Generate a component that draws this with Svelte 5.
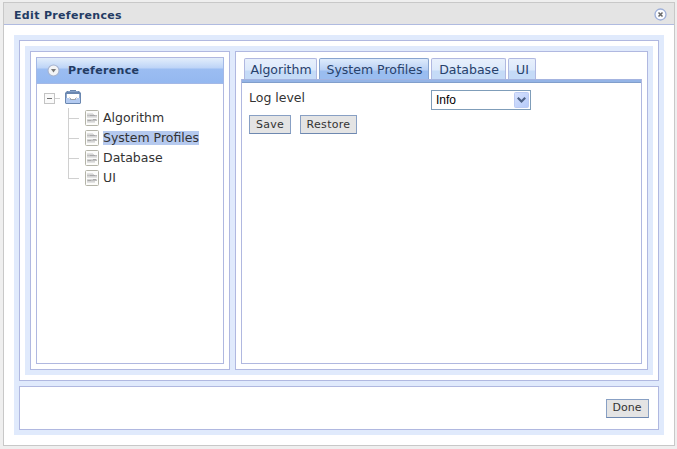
<script>
  const items = ['Algorithm', 'System Profiles', 'Database', 'UI'];
  const widths = [73, 110, 75, 28];
  let selected = $state('System Profiles');
</script>

<div class="window">
  <header class="titlebar">
    <span class="title">Edit Preferences</span>
    <svg class="close" width="13" height="13" viewBox="0 0 13 13">
      <circle cx="6.5" cy="6.5" r="5.5" fill="#fbfcff" stroke="#9dafd9" stroke-width="1.3" />
      <path d="M4.5 4.5l4 4M8.5 4.5l-4 4" stroke="#666" stroke-width="1.5" />
    </svg>
  </header>
  <div class="frame">
    <div class="box main">
      <div class="columns">
        <div class="box left">
          <div class="tree-panel">
            <div class="panel-head">
              <svg width="13" height="13" viewBox="0 0 13 13">
                <circle cx="6.5" cy="6.5" r="5.5" fill="#f3f4f6" stroke="#a4b2cf" stroke-width="1.1" />
                <path d="M4 5h5L6.5 8.5z" fill="#777" />
              </svg>
              <span class="pref">Preference</span>
            </div>
            <div class="tree">
              <div class="root">
                <svg width="16" height="11" viewBox="0 0 16 11" shape-rendering="crispEdges">
                  <rect x=".5" y=".5" width="10" height="10" fill="#fafafa" stroke="#c4c4c4" />
                  <path d="M3 5.5h5" stroke="#707070" />
                  <path d="M11 5.5h5" stroke="#d0d0d0" />
                </svg>
                <svg class="tray" width="16" height="14" viewBox="0 0 16 14">
                  <path d="M2 1h3V0h6v1h3l2 2v10l-1 1H1l-1-1V3z" fill="#6a87b0" />
                  <path d="M3 1.500h10" stroke="#86a2c8" />
                  <path d="M1 4h14v5H1z" fill="#8fa9cc" />
                  <path d="M2 4h12v5H2z" fill="#fff" />
                  <path d="M1 8h3l2 2h4l2-2h3v5H1z" fill="#b3caf0" />
                  <path d="M4.500 7.500l2 2h3l2-2" fill="#fff" stroke="#9a9a94" stroke-width=".8" />
                </svg>
              </div>
              {#each items as item, i}
                <div class="node" class:last={i === items.length - 1}>
                  <span class="branch"></span>
                  <svg width="14" height="16" viewBox="0 0 14 16">
                    <rect x=".5" y=".5" width="13" height="15" rx="1" fill="#fcfcfa" stroke="#b4b4a8" />
                    <path d="M2 3.500h6M2 7.500h10M2 12.500h8" stroke="#e2e2e2" />
                    <path d="M2 4.500h7M2 6.500h10M2 9.500h10M2 11.500h8" stroke="#d6d6d6" />
                    <path d="M2 5.500h10M2 10.500h10" stroke="#bebebe" />
                    <path d="M5 5.500h5M3 10.500h3M8 9.500h3" stroke="#a8a8a8" />
                  </svg>
                  <span class="label" class:selected={item === selected}>{item}</span>
                </div>
              {/each}
            </div>
          </div>
        </div>
        <div class="box right">
          <div class="tabs">
            {#each items as item, i}
              <button class="tab" class:active={item === selected} style="width:{widths[i]}px" onclick={() => (selected = item)}>{item}</button>
            {/each}
          </div>
          <div class="tab-body">
            <div class="field">
              <span class="field-label">Log level</span>
              <div class="select">
                <span>Info</span>
                <svg width="15" height="16" viewBox="0 0 15 16">
                  <defs>
                    <linearGradient id="arrow" x1="0" y1="0" x2="1" y2="1">
                      <stop offset="0" stop-color="#d7e2fe" />
                      <stop offset="1" stop-color="#b4c9f8" />
                    </linearGradient>
                  </defs>
                  <rect x=".5" y=".5" width="14" height="15" rx="1" fill="url(#arrow)" stroke="#bccbf3" />
                  <path d="M3.800 5.800l3.700 3.700 3.700-3.700" fill="none" stroke="#4d6185" stroke-width="2.200" />
                </svg>
              </div>
            </div>
            <div class="actions">
              <button class="btn save">Save</button>
              <button class="btn restore">Restore</button>
            </div>
          </div>
        </div>
      </div>
    </div>
    <div class="box footer">
      <button class="btn done">Done</button>
    </div>
  </div>
</div>

<style>
  :global(body) {
    background: #efefef;
    overflow: hidden;
  }
  div, header, button {
    box-sizing: border-box;
  }
  svg {
    display: block;
    flex: none;
  }
  .window {
    width: 672px;
    height: 444px;
    margin: 2px 0 0 3px;
    border: 1px solid #c8c8c8;
    background: #fff;
    font: 12.5px 'DejaVu Sans', Verdana, sans-serif;
    color: #333;
    display: flex;
    flex-direction: column;
  }
  :global(#app) {
    display: flow-root;
  }
  .titlebar {
    height: 22px;
    flex: none;
    background: #e4e4e4;
    border-bottom: 1px solid #b0bbe0;
    display: flex;
    justify-content: space-between;
    align-items: center;
    padding: 1px 7px 0 10px;
    font-weight: bold;
    font-size: 11px;
    letter-spacing: 0.33px;
    color: #233b63;
  }
  .title {
    white-space: nowrap;
    padding-top: 2px;
  }
  .frame {
    margin: 10px;
    height: 400px;
    flex: none;
    background: #e0eafc;
    padding: 5px;
    display: flex;
    flex-direction: column;
    gap: 5px;
  }
  .box {
    background: #fff;
    border: 1px solid #b0b8e0;
    padding: 5px;
  }
  .main {
    height: 341px;
  }
  .columns {
    height: 329px;
    background: #e0eafc;
    padding: 5px;
    display: flex;
    gap: 5px;
  }
  .left {
    width: 200px;
  }
  .right {
    width: 413px;
    display: flex;
    flex-direction: column;
  }
  .tree-panel {
    height: 307px;
    border: 1px solid #b0b8e0;
  }
  .panel-head {
    height: 26px;
    margin: 0 -1px;
    border: solid #a3b8e6;
    border-width: 0 1px 1px;
    background: linear-gradient(#e3eefb 0, #bdd4f7 10px, #9bbdf2 11px, #94b8f0 100%);
    display: flex;
    align-items: center;
    gap: 8px;
    padding-left: 10px;
    font-weight: bold;
    font-size: 11px;
    letter-spacing: 0.35px;
    color: #233b63;
  }
  .tree {
    padding: 7px 0 0 7px;
  }
  .root {
    display: flex;
    align-items: center;
    height: 14px;
    gap: 5px;
  }
  .tray {
    margin-top: -2px;
  }
  .node {
    height: 20px;
    display: flex;
    align-items: center;
    padding-left: 24px;
  }
  .root + .node {
    margin-top: 3px;
  }
  .branch {
    width: 11px;
    height: 20px;
    margin-right: 6px;
    border-left: 1px solid #d0d0d0;
    background: linear-gradient(#d0d0d0, #d0d0d0) 0 10px / 10px 1px no-repeat;
    box-sizing: border-box;
  }
  .last .branch {
    height: 11px;
    align-self: flex-start;
  }
  .label {
    margin-left: 4px;
    height: 14px;
    line-height: 14px;
    white-space: nowrap;
  }
  .selected {
    background: #b5c9ee;
  }
  .tabs {
    height: 22px;
    flex: none;
    display: flex;
    gap: 2px;
    padding: 1px 0 0 3px;
  }
  .tab {
    height: 21px;
    padding: 1px 0 0 1px;
    border: 1px solid #b0b8e0;
    border-bottom: 0;
    border-radius: 2px 2px 0 0;
    background: linear-gradient(#e8f0fc 0, #dce9fb 11px, #c5dbf7 12px, #c5dbf7 100%);
    font: inherit;
    color: #27416b;
    white-space: nowrap;
    line-height: 18px;
  }
  .tab.active {
    border-color: #88a4cf;
    background: linear-gradient(#deebfc 0, #b8d0f4 11px, #9abdf0 12px, #9abdf0 100%);
  }
  .tab-body {
    height: 285px;
    border: 1px solid #b0b8e0;
    border-top: 0;
    background: linear-gradient(#a4b4e0 0 1px, #94b4e6 1px 3px, #819fcb 3px 4px, #fff 4px);
    padding: 11px 7px;
  }
  .field {
    display: flex;
    height: 20px;
  }
  .field-label {
    width: 182px;
    line-height: 15px;
  }
  .select {
    width: 100px;
    height: 20px;
    border: 1px solid #7f9db9;
    background: #fff;
    display: flex;
    justify-content: space-between;
    align-items: center;
    padding: 0 1px 0 4px;
    font: 12px 'Liberation Sans', Arial, sans-serif;
    color: #000;
  }
  .actions {
    display: flex;
    gap: 9px;
    margin-top: 5px;
  }
  .btn {
    height: 19px;
    padding: 0;
    background: #e4e4e4;
    border: 1px solid #88a0c4;
    border-bottom-color: #6e88b0;
    font: 11px/16px 'DejaVu Sans', Verdana, sans-serif;
    color: #333;
    white-space: nowrap;
  }
  .save {
    width: 42px;
    letter-spacing: 0.2px;
  }
  .restore {
    width: 57px;
    letter-spacing: 0.3px;
  }
  .footer {
    height: 44px;
    display: flex;
    justify-content: flex-end;
    align-items: center;
    padding: 0 9px 0 0;
  }
  .done {
    width: 43px;
    padding-right: 1px;
  }
</style>
